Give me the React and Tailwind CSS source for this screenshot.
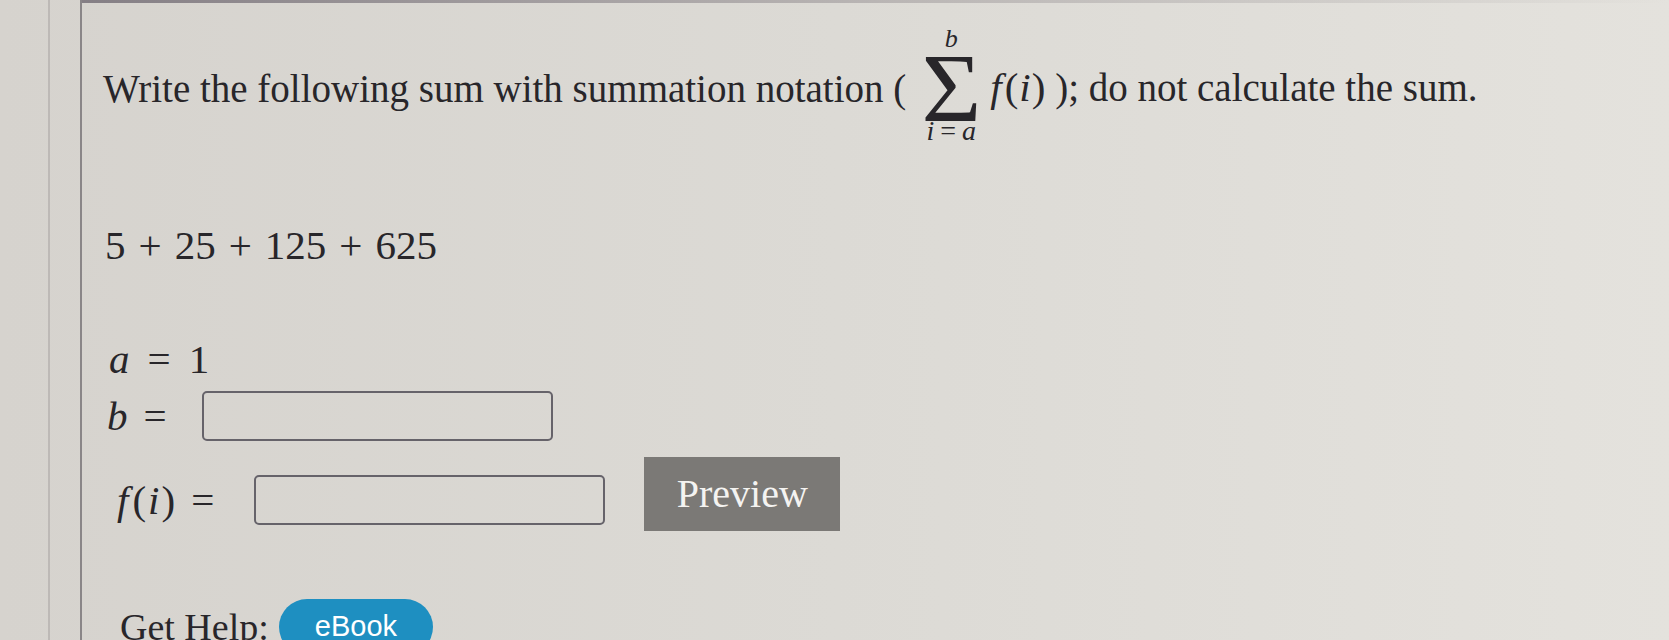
import React from 'react'

const Eq = () => <span className="mx-[16px] not-italic">=</span>
const Plus = () => <span className="mx-[13px]">+</span>

const App = () => {
  return (
    <div className="w-full h-[640px] overflow-hidden flex bg-gradient-to-r from-[#d6d3ce] via-[#dcdad5] to-[#e4e2dd] text-[#28262a] font-['Liberation_Serif',serif]">

      {/* left gutter */}
      <div className="w-[80px] shrink-0 flex">
        <div className="ml-[48px] w-[2px] h-full bg-[#bdb9b6]" />
      </div>

      {/* problem panel */}
      <div className="flex-1 border-l-2 border-[#8a8688]">
        <div className="h-[3px] bg-gradient-to-r from-[#857f85] via-[#b9b5b4] to-transparent" />

        <div className="pl-[21px] pt-[23px]">

          {/* prompt */}
          <div className="flex items-start">
            <div className="mt-[43px] text-[39px] leading-none whitespace-nowrap">
              Write the following sum with summation notation (
            </div>
            <div className="ml-[14px] flex flex-col items-center w-[62px]">
              <div className="text-[26px] leading-none italic">b</div>
              <div className="mt-[7px] h-[60px] flex items-center justify-center">
                <span className="inline-block text-[98px] leading-none scale-x-[1.05] mb-[3px]">Σ</span>
              </div>
              <div className="-mt-[2px] text-[28px] leading-none whitespace-nowrap">
                <i>i</i><span className="mx-[6px]">=</span><i>a</i>
              </div>
            </div>
            <div className="ml-[8px] mt-[41px] text-[39px] leading-none whitespace-nowrap">
              <span className="text-[41px]"><i>f</i><span className="ml-[3px]">(</span><i className="mx-[1px]">i</i>)</span> ); do not calculate the sum.
            </div>
          </div>

          {/* sum */}
          <div className="mt-[80px] ml-[2px] text-[41px] leading-none whitespace-nowrap">
            5<Plus />25<Plus />125<Plus />625
          </div>

          {/* a */}
          <div className="mt-[73px] ml-[6px] text-[41px] leading-none whitespace-nowrap">
            <i>a</i><span className="mx-[18px]">=</span>1
          </div>

          {/* b */}
          <div className="mt-[11px] ml-[4px] flex items-center text-[41px] leading-none">
            <span className="whitespace-nowrap"><i>b</i><Eq /></span>
            <div className="ml-[19px] w-[351px] h-[50px] border-2 border-[#66636a] rounded-[5px]" />
          </div>

          {/* f(i) */}
          <div className="mt-[16px] ml-[14px] flex items-center text-[41px] leading-none">
            <span className="whitespace-nowrap"><i>f</i><span className="ml-[4px]">(</span><i className="mx-[2px]">i</i>)<Eq /></span>
            <div className="ml-[24px] w-[351px] h-[50px] border-2 border-[#66636a] rounded-[5px]" />
            <button className="ml-[39px] mb-[12px] w-[196px] h-[74px] bg-[#7b7976] text-[#f4f3f1] text-[40px] leading-none">
              Preview
            </button>
          </div>

          {/* help */}
          <div className="mt-[56px] ml-[17px] flex items-center">
            <span className="text-[38px] leading-none whitespace-nowrap">Get Help:</span>
            <span className="ml-[10px] h-[56px] px-[36px] rounded-full bg-[#1e8fc1] text-white text-[29px] flex items-center font-['Liberation_Sans',sans-serif]">
              eBook
            </span>
          </div>

        </div>
      </div>
    </div>
  )
}

export default App
